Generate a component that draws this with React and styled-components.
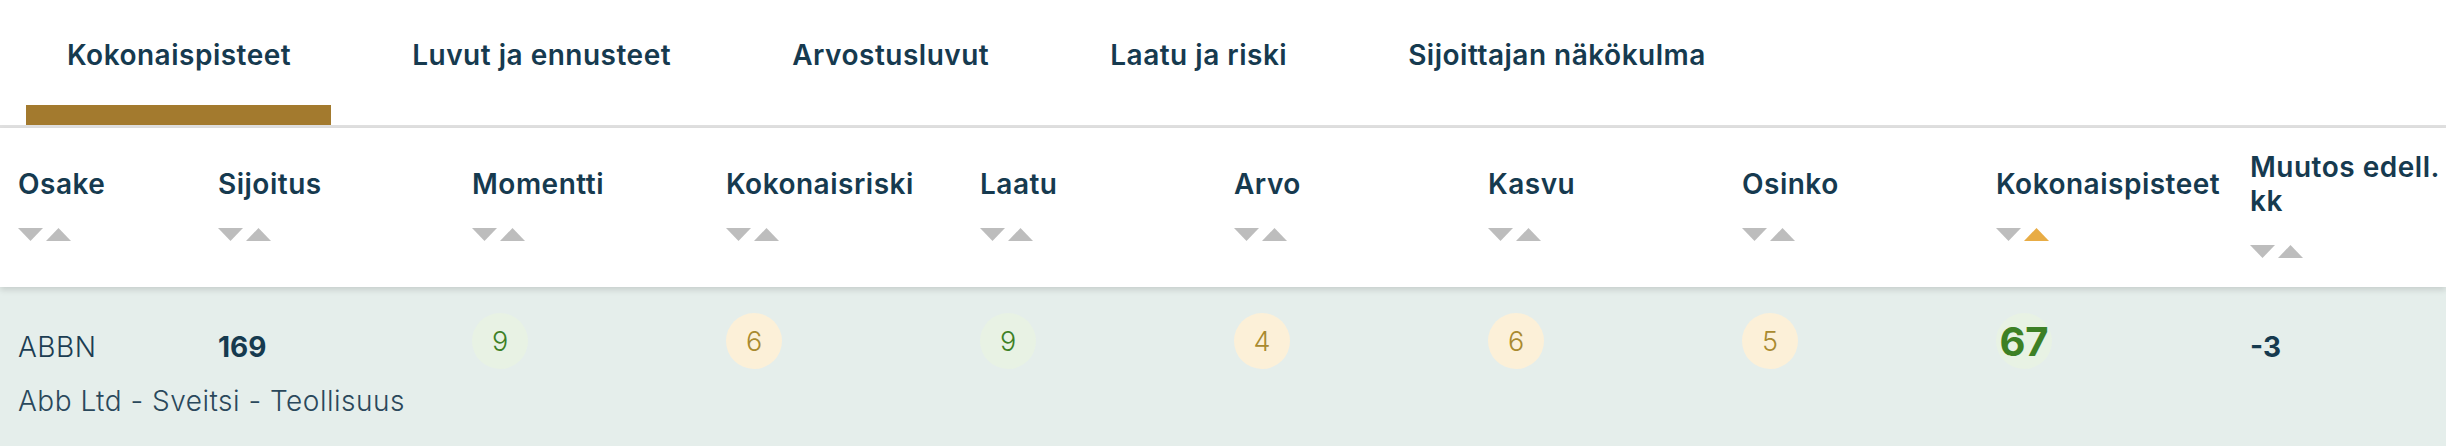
import React from "react";
import styled, { createGlobalStyle } from "styled-components";

const GlobalStyle = createGlobalStyle`
  body {
    margin: 0;
    background: #ffffff;
    font-family: "Inter", "Noto Sans", sans-serif;
    color: #163a4f;
  }
`;

const tabs = [
  "Kokonaispisteet",
  "Luvut ja ennusteet",
  "Arvostusluvut",
  "Laatu ja riski",
  "Sijoittajan näkökulma",
];

const columns = [
  "Osake",
  "Sijoitus",
  "Momentti",
  "Kokonaisriski",
  "Laatu",
  "Arvo",
  "Kasvu",
  "Osinko",
  "Kokonaispisteet",
  "Muutos edell.\nkk",
];

// scores for the one row shown
const scores = [
  { value: 9, tone: "good" },
  { value: 6, tone: "mid" },
  { value: 9, tone: "good" },
  { value: 4, tone: "mid" },
  { value: 6, tone: "mid" },
  { value: 5, tone: "mid" },
];

function Arrow({ up, active }) {
  return (
    <svg width="25" height="13" viewBox="0 0 25 13">
      <polygon
        points={up ? "0,13 12.5,0 25,13" : "0,0 25,0 12.5,13"}
        fill={active ? "#e8ac45" : "#bdbdbd"}
      />
    </svg>
  );
}

function App() {
  return (
    <Page>
      <GlobalStyle />
      <Tabs>
        {tabs.map((t, i) => (
          <Tab key={t} active={i === 0}>
            {t}
          </Tab>
        ))}
      </Tabs>

      <HeadRow>
        {columns.map((c, i) => (
          <HeadCell key={c}>
            <HeadLabel>{c}</HeadLabel>
            <Sorter>
              <Arrow />
              <Arrow up active={i === 8} />
            </Sorter>
          </HeadCell>
        ))}
      </HeadRow>

      <Row>
        <Cell>
          <Ticker>ABBN</Ticker>
          <Company>Abb Ltd - Sveitsi - Teollisuus</Company>
        </Cell>
        <Cell>
          <Strong>169</Strong>
        </Cell>
        {scores.map((s, i) => (
          <Cell key={i}>
            <Badge tone={s.tone}>{s.value}</Badge>
          </Cell>
        ))}
        <Cell>
          <Badge tone="good" big>
            67
          </Badge>
        </Cell>
        <Cell>
          <Strong>-3</Strong>
        </Cell>
      </Row>
    </Page>
  );
}

const Page = styled.div`
  width: 2446px;
  min-height: 446px;
  display: flex;
  flex-direction: column;
  background: #e5eeeb;
`;

const Tabs = styled.nav`
  display: flex;
  gap: 40px;
  padding-left: 26px;
  background: #ffffff;
  border-bottom: 3px solid #e0e0e0;
`;

const Tab = styled.div`
  box-sizing: border-box;
  height: 125px;
  padding: 38px 40px 0 41px;
  font-size: 28px;
  letter-spacing: 0.5px;
  line-height: 34px;
  font-weight: 600;
  color: #163a4f;
  white-space: nowrap;
  border-bottom: 20px solid ${(p) => (p.active ? "#a37a2e" : "transparent")};
`;

const grid = `
  display: grid;
  grid-template-columns: 200px repeat(8, 254px) 1fr;
`;

const HeadRow = styled.div`
  ${grid}
  position: relative;
  z-index: 1;
  height: 159px;
  background: #ffffff;
  box-shadow: 0 3px 6px rgba(0, 0, 0, 0.13);
`;

const HeadCell = styled.div`
  box-sizing: border-box;
  padding: 0 0 8px 18px;
  display: flex;
  flex-direction: column;
  justify-content: center;
  gap: 27px;
`;

const HeadLabel = styled.div`
  font-size: 28px;
  letter-spacing: 0.5px;
  line-height: 34px;
  font-weight: 600;
  color: #163a4f;
  white-space: pre;
`;

const Sorter = styled.div`
  display: flex;
  gap: 3px;
  height: 13px;
`;

const Row = styled.div`
  ${grid}
  flex: 1;
  align-items: start;
  padding: 26px 0 24px;
  background: #e5eeeb;
`;

const Cell = styled.div`
  box-sizing: border-box;
  padding-left: 18px;
  display: flex;
  flex-direction: column;
  gap: 20px;
  white-space: nowrap;
`;

const Ticker = styled.div`
  margin-top: 17px;
  font-size: 28px;
  letter-spacing: 0.5px;
  line-height: 34px;
  font-weight: 300;
  color: #1c3d52;
`;

const Company = styled.div`
  font-size: 28px;
  letter-spacing: 0.5px;
  line-height: 34px;
  font-weight: 300;
  color: #2a485b;
`;

const Strong = styled.div`
  margin-top: 17px;
  font-size: 28px;
  line-height: 34px;
  font-weight: 700;
  color: #163a4f;
`;

const Badge = styled.div`
  width: 56px;
  height: 56px;
  border-radius: 50%;
  display: flex;
  align-items: center;
  justify-content: center;
  font-size: ${(p) => (p.big ? "40px" : "27px")};
  font-weight: ${(p) => (p.big ? 700 : 300)};
  background: ${(p) => (p.tone === "good" ? "#e8f2e4" : "#fcf0d8")};
  color: ${(p) => (p.tone === "good" ? "#3d8025" : "#a98a2f")};
`;

export default App;
